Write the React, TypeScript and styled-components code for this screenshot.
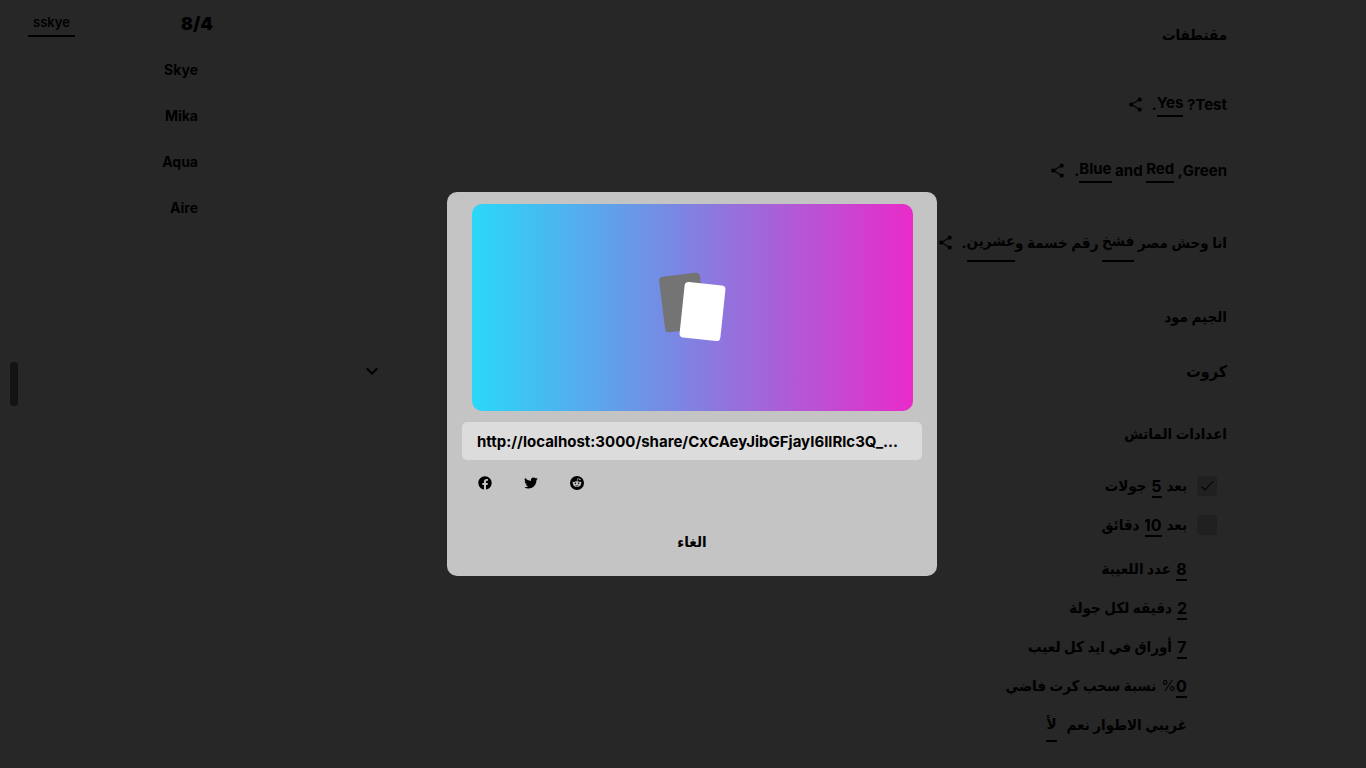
import React from "react";
import styled, { createGlobalStyle } from "styled-components";

const fonts = '"Inter", "DejaVu Sans Condensed", "DejaVu Sans", sans-serif';

const GlobalStyle = createGlobalStyle`
  * { box-sizing: border-box; }
  body {
    margin: 0;
    background: #272727;
    color: #000;
    font-family: ${fonts};
    font-size: 15px;
    font-weight: 700;
  }
  button, input { font: inherit; color: inherit; }
`;

const Page = styled.div`
  display: flex;
  min-height: 100vh;
`;

const Sidebar = styled.aside`
  flex: 0 0 228px;
  padding: 8px 15px 0 28px;
`;

const SidebarTop = styled.div`
  display: flex;
  justify-content: space-between;
  align-items: flex-start;
  height: 39px;
`;

const NameInput = styled.input`
  width: 47px;
  height: 29px;
  padding: 0 5px;
  border: 0;
  border-bottom: 2px solid #000;
  background: transparent;
  font-size: 13px;
  font-weight: 600;
  outline: 0;
`;

const PlayerCount = styled.strong`
  font-size: 18px;
  line-height: 32px;
`;

const Players = styled.ul`
  margin: 0;
  padding: 0 15px 0 0;
  list-style: none;
  text-align: right;
`;

const Player = styled.li`
  height: 46px;
  line-height: 46px;
  font-size: 14px;
`;

const Main = styled.main`
  flex: 1;
  min-width: 0;
  margin-left: 129px;
  padding: 15px 139px 20px 0;
`;

const Heading = styled.h2`
  margin: 0;
  font-size: 15px;
  line-height: 40px;
`;

const Cards = styled.div`
  margin: 16px 0;
`;

const Card = styled.div<{ $tall?: boolean }>`
  display: flex;
  align-items: center;
  height: ${(p) => (p.$tall ? 78 : 66)}px;
  white-space: pre;
`;

const Blank = styled.span<{ $tall?: boolean }>`
  height: ${(p) => (p.$tall ? 40 : 26)}px;
  line-height: ${(p) => (p.$tall ? 38 : 24)}px;
  border-bottom: 2px solid #000;
`;

const IconButton = styled.button`
  display: flex;
  margin: 0;
  padding: 0 8px;
  border: 0;
  background: transparent;
  cursor: pointer;
`;

const Deck = styled.button`
  display: flex;
  justify-content: space-between;
  align-items: center;
  width: 100%;
  height: 40px;
  margin: 14px 0 23px;
  padding: 0 0 0 3px;
  border: 0;
  background: transparent;
  font-size: 16px;
  cursor: pointer;
`;

const Settings = styled.div`
  display: flex;
  flex-direction: column;
  padding: 12px 10px 0 0;
`;

const Setting = styled.label<{ $first?: boolean }>`
  display: flex;
  align-items: center;
  gap: 5px;
  height: 39px;
  margin-top: ${(p) => (p.$first ? 5 : 0)}px;
  padding-right: 30px;
`;

const CheckSetting = styled(Setting)`
  padding-right: 0;
`;

const Tick = styled.span`
  display: grid;
  width: 20px;
  height: 20px;
  margin-left: 5px;
  > * { grid-area: 1 / 1; }
  svg { place-self: center; pointer-events: none; }
`;

const TickBox = styled.input`
  appearance: none;
  width: 20px;
  height: 20px;
  margin: 0;
  border-radius: 3px;
  background: #202020;
  & + svg { visibility: hidden; }
  &:checked + svg { visibility: visible; }
`;

const NumberInput = styled.input<{ $width: number }>`
  width: ${(p) => p.$width}px;
  height: 24px;
  padding: 2px 0 0;
  border: 0;
  border-bottom: 2px solid #000;
  background: transparent;
  font-size: 16px;
  text-align: center;
  outline: 0;
`;

const Percent = styled.span`
  margin-right: -5px;
  font-weight: 400;
`;

const Toggle = styled.button`
  height: 34px;
  margin: 0 5px 0 0;
  padding: 0;
  border: 0;
  border-bottom: 2px solid #000;
  background: transparent;
`;

const ScrollThumb = styled.div`
  position: fixed;
  left: 10px;
  top: calc(50% - 22px);
  width: 8px;
  height: 44px;
  border-radius: 4px;
  background: #131313;
`;

const Overlay = styled.div`
  position: fixed;
  inset: 0;
  display: flex;
  align-items: center;
  justify-content: center;
  padding-left: 18px;
`;

const Dialog = styled.section`
  display: flex;
  flex-direction: column;
  width: 490px;
  max-width: 100%;
  padding: 12px 15px 15px;
  border-radius: 10px;
  background: #c4c4c4;
`;

const Preview = styled.div`
  display: flex;
  align-items: center;
  justify-content: center;
  height: 207px;
  margin: 0 9px 11px 10px;
  border-radius: 10px;
  background: linear-gradient(to right, #2ad8f8, #7889e4 45%, #e92bc9);
`;

const LinkInput = styled.input`
  width: 100%;
  height: 38px;
  padding: 0 15px;
  border: 0;
  border-radius: 5px;
  background: #dcdcdc;
  text-overflow: ellipsis;
  outline: 0;
`;

const Socials = styled.div`
  display: flex;
  gap: 30px;
  padding: 15px;
`;

const SocialButton = styled.button`
  display: flex;
  padding: 0;
  border: 0;
  background: transparent;
  cursor: pointer;
`;

const Cancel = styled.button`
  align-self: center;
  height: 40px;
  margin-top: 15px;
  padding: 0 15px;
  border: 0;
  background: transparent;
  cursor: pointer;
`;

const SvgIcon = ({ d, size = 16 }: { d: string; size?: number }) => (
  <svg width={size} height={size} viewBox="0 0 24 24" fill="currentColor" aria-hidden="true">
    <path d={d} />
  </svg>
);

const sharePath =
  "M18 16.08c-.76 0-1.44.3-1.96.77L8.91 12.7c.05-.23.09-.46.09-.7s-.04-.47-.09-.7l7.05-4.11c.54.5 1.25.81 2.04.81 1.66 0 3-1.34 3-3s-1.34-3-3-3-3 1.34-3 3c0 .24.04.47.09.7L8.04 9.81C7.5 9.31 6.79 9 6 9c-1.66 0-3 1.34-3 3s1.34 3 3 3c.79 0 1.5-.31 2.04-.81l7.12 4.16c-.05.21-.08.43-.08.65 0 1.61 1.31 2.92 2.92 2.92s2.92-1.31 2.92-2.92-1.31-2.92-2.92-2.92z";
const chevronPath = "M7.41 8.59 12 13.17l4.59-4.58L18 10l-6 6-6-6z";
const facebookPath =
  "M22 12c0-5.52-4.48-10-10-10S2 6.48 2 12c0 4.99 3.66 9.13 8.44 9.88v-6.99H7.9V12h2.54V9.8c0-2.51 1.49-3.89 3.78-3.89 1.09 0 2.24.19 2.24.19v2.46h-1.26c-1.24 0-1.63.77-1.63 1.56V12h2.78l-.45 2.89h-2.33v6.99C18.34 21.13 22 16.99 22 12z";
const twitterPath =
  "M22.16 5.66c-.76.34-1.58.56-2.4.66a4.2 4.2 0 0 0 1.84-2.31c-.82.48-1.72.82-2.66 1a4.18 4.18 0 0 0-7.13 3.82A11.88 11.88 0 0 1 3.18 4.45a4.17 4.17 0 0 0 1.3 5.59 4.16 4.16 0 0 1-1.9-.53v.06a4.19 4.19 0 0 0 3.36 4.1 4.2 4.2 0 0 1-1.89.07 4.19 4.19 0 0 0 3.91 2.91A8.4 8.4 0 0 1 1.78 18.38 11.83 11.83 0 0 0 8.2 20.26c7.7 0 11.91-6.38 11.91-11.91l-.01-.54a8.5 8.5 0 0 0 2.06-2.15z";

const ShareIcon = () => (
  <IconButton type="button" aria-label="Share">
    <SvgIcon d={sharePath} size={17} />
  </IconButton>
);

const CheckIcon = () => (
  <svg width="14" height="14" viewBox="0 0 14 14" fill="none" stroke="#000" strokeWidth="1.1" aria-hidden="true">
    <path d="m1.500 7.500 3.500 3.500 7.800-8.500" />
  </svg>
);

const RedditIcon = () => (
  <svg width="16" height="16" viewBox="0 0 24 24" aria-hidden="true">
    <circle cx="12" cy="12" r="10.500" fill="#000" />
    <path d="m12 9 .9-3.600 3.200.7" fill="none" stroke="#c4c4c4" strokeWidth="0.900" />
    <circle cx="16.300" cy="6.800" r="1.100" fill="#c4c4c4" />
    <circle cx="6.800" cy="11.600" r="1.400" fill="#c4c4c4" />
    <circle cx="17.200" cy="11.600" r="1.400" fill="#c4c4c4" />
    <ellipse cx="12" cy="13.400" rx="5.800" ry="4.200" fill="#c4c4c4" />
    <circle cx="9.600" cy="12.400" r="1.200" />
    <circle cx="14.400" cy="12.400" r="1.200" />
    <path d="M9.500 15.200c1.400 1.200 3.600 1.200 5 0" fill="none" stroke="#000" strokeWidth="0.900" />
  </svg>
);

const CardsLogo = () => (
  <svg width="70" height="72" viewBox="0 0 70 72" aria-hidden="true">
    <rect x="4" y="2.500" width="41" height="56" rx="4" fill="#747474" transform="rotate(-7 24.500 30.500)" />
    <rect x="24" y="11.500" width="41" height="56" rx="4" fill="#fff" transform="rotate(6 44.500 39.500)" />
  </svg>
);

const players = ["Skye", "Mika", "Aqua", "Aire"];

const counts = [
  { value: "8", width: 11, label: "عدد اللعيبة" },
  { value: "2", width: 10, label: "دقيقه لكل جولة" },
  { value: "7", width: 10, label: "أوراق في ايد كل لعيب" },
  { value: "0", width: 11, label: "نسبة سحب كرت فاضي", percent: true },
];

const limits = [
  { value: "5", width: 10, label: "جولات", on: true },
  { value: "10", width: 17, label: "دقائق", on: false },
];

export default function App() {
  return (
    <>
      <GlobalStyle />
      <Page>
        <Sidebar>
          <SidebarTop>
            <NameInput aria-label="Name" defaultValue="sskye" />
            <PlayerCount>8/4</PlayerCount>
          </SidebarTop>
          <Players>
            {players.map((name) => (
              <Player key={name}>{name}</Player>
            ))}
          </Players>
        </Sidebar>
        <Main dir="rtl" lang="ar">
          <Heading>مقتطفات</Heading>
          <Cards>
            <Card>
              <span>Test? </span>
              <Blank>Yes</Blank>
              <span>.</span>
              <ShareIcon />
            </Card>
            <Card>
              <span>Green, </span>
              <Blank>Red</Blank>
              <span> and </span>
              <Blank>Blue</Blank>
              <span>.</span>
              <ShareIcon />
            </Card>
            <Card $tall>
              <span>انا وحش مصر </span>
              <Blank $tall>فشخ</Blank>
              <span> رقم خسمة و</span>
              <Blank $tall>عشرين</Blank>
              <span>.</span>
              <ShareIcon />
            </Card>
          </Cards>
          <Heading>الجيم مود</Heading>
          <Deck type="button">
            <span>كروت</span>
            <SvgIcon d={chevronPath} size={24} />
          </Deck>
          <Heading>اعدادات الماتش</Heading>
          <Settings>
            {limits.map((item) => (
              <CheckSetting key={item.label}>
                <Tick>
                  <TickBox type="checkbox" defaultChecked={item.on} />
                  <CheckIcon />
                </Tick>
                <span>بعد</span>
                <NumberInput $width={item.width} defaultValue={item.value} aria-label={item.label} />
                <span>{item.label}</span>
              </CheckSetting>
            ))}
            {counts.map((item, i) => (
              <Setting key={item.label} $first={i === 0}>
                <NumberInput $width={item.width} defaultValue={item.value} />
                {item.percent && <Percent>%</Percent>}
                <span>{item.label}</span>
              </Setting>
            ))}
            <Setting as="div">
              <span>غريبي الاطوار نعم</span>
              <Toggle type="button">لأ</Toggle>
            </Setting>
          </Settings>
        </Main>
      </Page>
      <ScrollThumb />
      <Overlay>
        <Dialog role="dialog" aria-modal="true" aria-label="Share">
          <Preview>
            <CardsLogo />
          </Preview>
          <LinkInput
            readOnly
            aria-label="Share link"
            value="http://localhost:3000/share/CxCAeyJibGFjayI6IlRlc3Q_..."
          />
          <Socials>
            <SocialButton type="button" aria-label="Facebook">
              <SvgIcon d={facebookPath} />
            </SocialButton>
            <SocialButton type="button" aria-label="Twitter">
              <SvgIcon d={twitterPath} />
            </SocialButton>
            <SocialButton type="button" aria-label="Reddit">
              <RedditIcon />
            </SocialButton>
          </Socials>
          <Cancel type="button">الغاء</Cancel>
        </Dialog>
      </Overlay>
    </>
  );
}
